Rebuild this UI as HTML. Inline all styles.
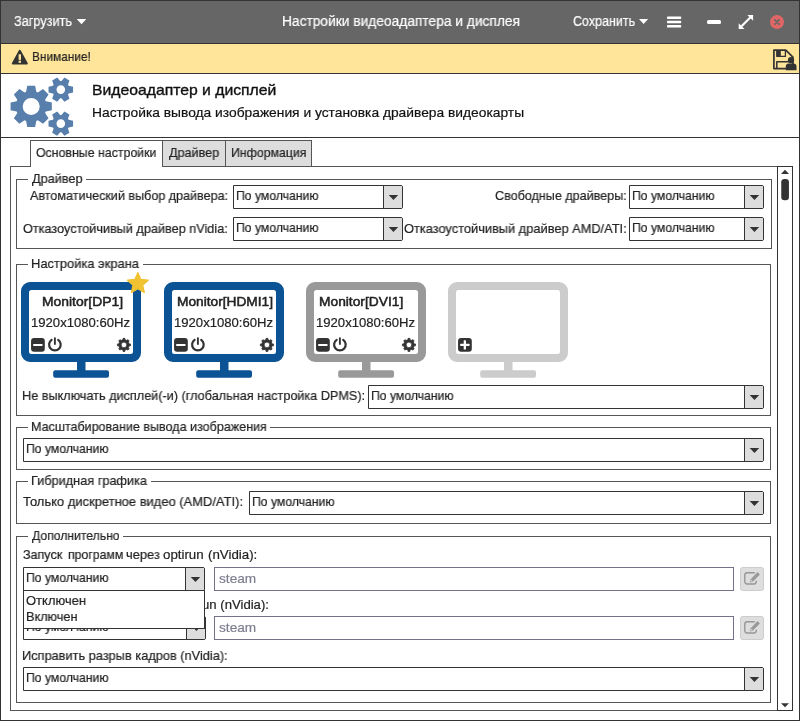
<!DOCTYPE html>
<html lang="ru"><head><meta charset="utf-8"><title>Настройки видеоадаптера и дисплея</title>
<style>
html,body{margin:0;padding:0;background:#fff}
body{width:800px;height:721px;position:relative;overflow:hidden;font-family:"Liberation Sans",sans-serif}
.abs{position:absolute;display:block}
.t{position:absolute;white-space:pre;line-height:1;transform-origin:0 50%;-webkit-text-stroke:0.2px currentColor;will-change:transform}
</style></head><body>
<div class="abs" style="left:0px;top:0px;width:800px;height:44px;background:#666"></div>
<div class="abs" style="left:0px;top:0px;width:800px;height:1px;background:#333"></div>
<span class="t" style="left:13.62px;top:14.07px;font-size:14px;color:#fff;transform:scaleX(0.9058);">Загрузить</span>
<svg class="abs" style="left:76px;top:18px" width="12" height="8"><path d="M0.7 0.9H10.3L5.5 6.2Z" fill="#fff"/></svg>
<span class="t" style="left:281.90px;top:14.07px;font-size:14px;color:#fff;transform:scaleX(0.9828);">Настройки видеоадаптера и дисплея</span>
<span class="t" style="left:573.37px;top:14.07px;font-size:14px;color:#fff;transform:scaleX(0.8932);">Сохранить</span>
<svg class="abs" style="left:639px;top:18px" width="11" height="8"><path d="M0 0.9H9.2L4.6 6.1Z" fill="#fff"/></svg>
<svg class="abs" style="left:667px;top:16px" width="15" height="13"><rect x="0" y="0.5" width="14.2" height="2.5" rx="0.7" fill="#fff"/><rect x="0" y="4.8" width="14.2" height="2.5" rx="0.7" fill="#fff"/><rect x="0" y="9.1" width="14.2" height="2.5" rx="0.7" fill="#fff"/></svg>
<div class="abs" style="left:707px;top:20px;width:14px;height:4px;border-radius:1.5px;background:#fff"></div>
<svg class="abs" style="left:738px;top:14px" width="16" height="16"><path d="M9.3 0.9H15.1V6.7Z M0.7 9.3V15.1H6.5Z" fill="#fff"/><path d="M3.5 12.3L12.3 3.5" stroke="#fff" stroke-width="2.1"/></svg>
<svg class="abs" style="left:769px;top:14px" width="16" height="16"><circle cx="8" cy="8" r="7" fill="#e06666"/><path d="M5.9 5.9L10.1 10.1M10.1 5.9L5.9 10.1" stroke="#666" stroke-width="1.8" stroke-linecap="round"/></svg>
<div class="abs" style="left:0px;top:43px;width:800px;height:1px;background:#333"></div>
<div class="abs" style="left:0px;top:44px;width:800px;height:29px;background:#ffe599"></div>
<svg class="abs" style="left:11px;top:49px" width="18" height="17"><path d="M8.8 1.8L15.8 14.6H1.8Z" fill="#333" stroke="#333" stroke-width="2" stroke-linejoin="round"/><rect x="7.6" y="5.3" width="2.4" height="5.6" fill="#ffe599"/><rect x="7.6" y="11.7" width="2.4" height="2.1" fill="#ffe599"/></svg>
<span class="t" style="left:31.65px;top:49.92px;font-size:13.5px;color:#222;transform:scaleX(0.8784);">Внимание!</span>
<svg class="abs" style="left:770px;top:46px" width="30" height="28"><path d="M3.9 4.1H15.8L22.9 11.2V22.6H3.9Z" fill="none" stroke="#333" stroke-width="1.7" stroke-linejoin="round"/><rect x="6.4" y="4.1" width="4.4" height="6.3" fill="#333"/><path d="M6.9 4.1V10.4H15.4V4.1" fill="none" stroke="#333" stroke-width="1.3"/><path d="M6.8 22.6V15.7H19" fill="none" stroke="#333" stroke-width="1.5" stroke-linejoin="round"/><circle cx="21" cy="14.2" r="3.1" fill="#333"/><path d="M15.8 24.2V20.6A3.2 3.2 0 0 1 19 17.4H23.3A3.2 3.2 0 0 1 26.5 20.6V24.2Z" fill="#333"/></svg>
<div class="abs" style="left:0px;top:73px;width:800px;height:1px;background:#333"></div>
<svg class="abs" style="left:0px;top:0px" width="100" height="140"><path d="M26.10 91.87 L27.26 85.77 L35.14 85.77 L36.30 91.87 L37.87 92.52 L43.00 89.03 L48.57 94.60 L45.08 99.73 L45.73 101.30 L51.83 102.46 L51.83 110.34 L45.73 111.50 L45.08 113.07 L48.57 118.20 L43.00 123.77 L37.87 120.28 L36.30 120.93 L35.14 127.03 L27.26 127.03 L26.10 120.93 L24.53 120.28 L19.40 123.77 L13.83 118.20 L17.32 113.07 L16.67 111.50 L10.57 110.34 L10.57 102.46 L16.67 101.30 L17.32 99.73 L13.83 94.60 L19.40 89.03 L24.53 92.52Z M22.70 106.40 a8.50 8.50 0 1 0 17.00 0 a8.50 8.50 0 1 0 -17.00 0Z M68.63 85.81 L73.07 86.72 L73.07 92.48 L68.63 93.39 L68.00 94.49 L69.43 98.79 L64.44 101.66 L61.44 98.28 L60.16 98.28 L57.16 101.66 L52.17 98.79 L53.60 94.49 L52.97 93.39 L48.53 92.48 L48.53 86.72 L52.97 85.81 L53.60 84.71 L52.17 80.41 L57.16 77.54 L60.16 80.92 L61.44 80.92 L64.44 77.54 L69.43 80.41 L68.00 84.71Z M56.50 89.60 a4.30 4.30 0 1 0 8.60 0 a4.30 4.30 0 1 0 -8.60 0Z M68.63 119.81 L73.07 120.72 L73.07 126.48 L68.63 127.39 L68.00 128.49 L69.43 132.79 L64.44 135.66 L61.44 132.28 L60.16 132.28 L57.16 135.66 L52.17 132.79 L53.60 128.49 L52.97 127.39 L48.53 126.48 L48.53 120.72 L52.97 119.81 L53.60 118.71 L52.17 114.41 L57.16 111.54 L60.16 114.92 L61.44 114.92 L64.44 111.54 L69.43 114.41 L68.00 118.71Z M56.50 123.60 a4.30 4.30 0 1 0 8.60 0 a4.30 4.30 0 1 0 -8.60 0Z" fill="#587eab" fill-rule="evenodd"/></svg>
<span class="t" style="left:91.74px;top:82.06px;font-size:15px;color:#111;transform:scaleX(1.0491);-webkit-text-stroke:0.35px currentColor;">Видеоадаптер и дисплей</span>
<span class="t" style="left:91.90px;top:105.62px;font-size:13.5px;color:#111;transform:scaleX(1.0219);">Настройка вывода изображения и установка драйвера видеокарты</span>
<div class="abs" style="left:0px;top:137px;width:800px;height:1px;background:#333"></div>
<div class="abs" style="left:10px;top:166px;width:783px;height:1px;background:#555"></div>
<div class="abs" style="left:10px;top:166px;width:1px;height:545px;background:#555"></div>
<div class="abs" style="left:792px;top:166px;width:1px;height:545px;background:#555"></div>
<div class="abs" style="left:10px;top:710px;width:783px;height:1px;background:#555"></div>
<div class="abs" style="left:162px;top:140px;width:64px;height:27px;background:#ddd;border:1px solid #555;box-sizing:border-box"></div>
<div class="abs" style="left:225px;top:140px;width:87px;height:27px;background:#ddd;border:1px solid #555;box-sizing:border-box"></div>
<div class="abs" style="left:30px;top:140px;width:133px;height:27px;background:#fff;border:1px solid #555;border-bottom:none;box-sizing:border-box"></div>
<span class="t" style="left:36.44px;top:145.97px;font-size:13px;color:#222;transform:scaleX(0.9493);">Основные настройки</span>
<span class="t" style="left:168.94px;top:145.97px;font-size:13px;color:#222;transform:scaleX(0.9698);">Драйвер</span>
<span class="t" style="left:230.51px;top:145.97px;font-size:13px;color:#222;transform:scaleX(0.9487);">Информация</span>
<div class="abs" style="left:777px;top:166px;width:16px;height:545px;border:1px solid #333;box-sizing:border-box"></div>
<svg class="abs" style="left:778px;top:167px" width="14" height="543"><path d="M3 6.9H11L7 2.8Z" fill="#333"/><rect x="3.25" y="12" width="7.7" height="21.3" rx="3.3" fill="#333"/><path d="M3 536.2H11L7 540.2Z" fill="#333"/></svg>
<div class="abs" style="left:16px;top:179px;width:756px;height:70px;border:1px solid #555;box-sizing:border-box"></div>
<div class="abs" style="left:28px;top:179px;width:58px;height:1px;background:#fff"></div>
<span class="t" style="left:31.94px;top:171.57px;font-size:13px;color:#222;transform:scaleX(0.9776);">Драйвер</span>
<span class="t" style="left:30.00px;top:189.47px;font-size:13px;color:#222;transform:scaleX(0.9669);">Автоматический выбор драйвера:</span>
<div class="abs" style="left:233px;top:185px;width:170px;height:24px;border:1px solid #333;box-sizing:border-box;background:#fff;border-radius:0 2px 2px 0;overflow:hidden"><div style="position:absolute;right:0;top:0;bottom:0;width:18px;background:#ddd;border-left:1px solid #333"></div></div>
<svg class="abs" style="left:388px;top:194px" width="12" height="8"><g transform="translate(0.20 0.20)"><path d="M0.5 0.7H10L5.25 5.8Z" fill="#333"/></g></svg>
<span class="t" style="left:235.62px;top:189.47px;font-size:13px;color:#222;transform:scaleX(0.9380);">По умолчанию</span>
<span class="t" style="left:495.37px;top:189.47px;font-size:13px;color:#222;transform:scaleX(0.9672);">Свободные драйверы:</span>
<div class="abs" style="left:629px;top:185px;width:135px;height:24px;border:1px solid #333;box-sizing:border-box;background:#fff;border-radius:0 2px 2px 0;overflow:hidden"><div style="position:absolute;right:0;top:0;bottom:0;width:18px;background:#ddd;border-left:1px solid #333"></div></div>
<svg class="abs" style="left:749px;top:194px" width="12" height="8"><g transform="translate(0.20 0.20)"><path d="M0.5 0.7H10L5.25 5.8Z" fill="#333"/></g></svg>
<span class="t" style="left:631.62px;top:189.47px;font-size:13px;color:#222;transform:scaleX(0.9380);">По умолчанию</span>
<span class="t" style="left:23.43px;top:221.97px;font-size:13px;color:#222;transform:scaleX(0.9747);">Отказоустойчивый драйвер nVidia:</span>
<div class="abs" style="left:233px;top:217px;width:170px;height:24px;border:1px solid #333;box-sizing:border-box;background:#fff;border-radius:0 2px 2px 0;overflow:hidden"><div style="position:absolute;right:0;top:0;bottom:0;width:18px;background:#ddd;border-left:1px solid #333"></div></div>
<svg class="abs" style="left:388px;top:226px" width="12" height="8"><g transform="translate(0.20 0.20)"><path d="M0.5 0.7H10L5.25 5.8Z" fill="#333"/></g></svg>
<span class="t" style="left:235.62px;top:221.47px;font-size:13px;color:#222;transform:scaleX(0.9380);">По умолчанию</span>
<span class="t" style="left:404.42px;top:221.97px;font-size:13px;color:#222;transform:scaleX(0.9861);">Отказоустойчивый драйвер AMD/ATI:</span>
<div class="abs" style="left:629px;top:217px;width:135px;height:24px;border:1px solid #333;box-sizing:border-box;background:#fff;border-radius:0 2px 2px 0;overflow:hidden"><div style="position:absolute;right:0;top:0;bottom:0;width:18px;background:#ddd;border-left:1px solid #333"></div></div>
<svg class="abs" style="left:749px;top:226px" width="12" height="8"><g transform="translate(0.20 0.20)"><path d="M0.5 0.7H10L5.25 5.8Z" fill="#333"/></g></svg>
<span class="t" style="left:631.62px;top:221.47px;font-size:13px;color:#222;transform:scaleX(0.9380);">По умолчанию</span>
<div class="abs" style="left:16px;top:264px;width:755px;height:152px;border:1px solid #555;box-sizing:border-box"></div>
<div class="abs" style="left:28px;top:264px;width:115px;height:1px;background:#fff"></div>
<span class="t" style="left:30.97px;top:256.57px;font-size:13px;color:#222;transform:scaleX(0.9925);">Настройка экрана</span>
<svg class="abs" style="left:21px;top:282px" width="122" height="98"><path fill-rule="evenodd" fill="#0b5394" d="M9 0H111A9 9 0 0 1 120 9V71A9 9 0 0 1 111 80H9A9 9 0 0 1 0 71V9A9 9 0 0 1 9 0Z M10.5 8A2.5 2.5 0 0 0 8 10.5V69.5A2.5 2.5 0 0 0 10.5 72H109.5A2.5 2.5 0 0 0 112 69.5V10.5A2.5 2.5 0 0 0 109.5 8Z"/><rect x="56" y="79" width="8.5" height="10" fill="#0b5394"/><rect x="32.2" y="88.2" width="55.8" height="7.5" rx="2" fill="#0b5394"/></svg>
<span class="t" style="left:41.89px;top:295.17px;font-size:13px;-webkit-text-stroke:0.5px currentColor;color:#222;transform:scaleX(1.0684);">Monitor[DP1]</span>
<span class="t" style="left:31.02px;top:316.17px;font-size:13px;color:#222;transform:scaleX(1.0079);">1920x1080:60Hz</span>
<svg class="abs" style="left:31px;top:337px" width="15" height="15"><g transform="translate(0.00 0.90)"><rect x="0.05" y="0" width="13.75" height="13.75" rx="3" fill="#333"/><rect x="2.2" y="6" width="9.3" height="2.2" rx="0.5" fill="#fff"/></g></svg>
<svg class="abs" style="left:47px;top:336px" width="16" height="17"><path d="M4.6 3.8A5.8 5.8 0 1 0 11.2 3.8" fill="none" stroke="#333" stroke-width="2.2" stroke-linecap="round"/><path d="M7.9 2.1V8" stroke="#333" stroke-width="1.9" stroke-linecap="round"/></svg>
<svg class="abs" style="left:116px;top:337px" width="16" height="16"><g transform="translate(0.45 0.40)"><path d="M6.55 2.29 L6.57 0.97 L8.43 0.97 L8.45 2.29 L10.51 3.14 L11.46 2.22 L12.78 3.54 L11.86 4.49 L12.71 6.55 L14.03 6.57 L14.03 8.43 L12.71 8.45 L11.86 10.51 L12.78 11.46 L11.46 12.78 L10.51 11.86 L8.45 12.71 L8.43 14.03 L6.57 14.03 L6.55 12.71 L4.49 11.86 L3.54 12.78 L2.22 11.46 L3.14 10.51 L2.29 8.45 L0.97 8.43 L0.97 6.57 L2.29 6.55 L3.14 4.49 L2.22 3.54 L3.54 2.22 L4.49 3.14Z M4.70 7.50 a2.80 2.80 0 1 0 5.60 0 a2.80 2.80 0 1 0 -5.60 0Z" fill="#333" stroke="#333" stroke-width="0.8" stroke-linejoin="round" fill-rule="evenodd"/></g></svg>
<svg class="abs" style="left:120px;top:265px" width="36" height="36"><path d="M17.85 7.65 L20.85 14.42 L28.22 15.18 L22.70 20.13 L24.26 27.37 L17.85 23.65 L11.44 27.37 L13.00 20.13 L7.48 15.18 L14.85 14.42Z" fill="#f1c232" stroke="#f1c232" stroke-width="1.3" stroke-linejoin="round"/></svg>
<svg class="abs" style="left:164px;top:282px" width="122" height="98"><path fill-rule="evenodd" fill="#0b5394" d="M9 0H111A9 9 0 0 1 120 9V71A9 9 0 0 1 111 80H9A9 9 0 0 1 0 71V9A9 9 0 0 1 9 0Z M10.5 8A2.5 2.5 0 0 0 8 10.5V69.5A2.5 2.5 0 0 0 10.5 72H109.5A2.5 2.5 0 0 0 112 69.5V10.5A2.5 2.5 0 0 0 109.5 8Z"/><rect x="56" y="79" width="8.5" height="10" fill="#0b5394"/><rect x="32.2" y="88.2" width="55.8" height="7.5" rx="2" fill="#0b5394"/></svg>
<span class="t" style="left:176.60px;top:295.17px;font-size:13px;-webkit-text-stroke:0.5px currentColor;color:#222;transform:scaleX(1.0550);">Monitor[HDMI1]</span>
<span class="t" style="left:174.02px;top:316.17px;font-size:13px;color:#222;transform:scaleX(1.0079);">1920x1080:60Hz</span>
<svg class="abs" style="left:174px;top:337px" width="15" height="15"><g transform="translate(0.00 0.90)"><rect x="0.05" y="0" width="13.75" height="13.75" rx="3" fill="#333"/><rect x="2.2" y="6" width="9.3" height="2.2" rx="0.5" fill="#fff"/></g></svg>
<svg class="abs" style="left:190px;top:336px" width="16" height="17"><path d="M4.6 3.8A5.8 5.8 0 1 0 11.2 3.8" fill="none" stroke="#333" stroke-width="2.2" stroke-linecap="round"/><path d="M7.9 2.1V8" stroke="#333" stroke-width="1.9" stroke-linecap="round"/></svg>
<svg class="abs" style="left:259px;top:337px" width="16" height="16"><g transform="translate(0.45 0.40)"><path d="M6.55 2.29 L6.57 0.97 L8.43 0.97 L8.45 2.29 L10.51 3.14 L11.46 2.22 L12.78 3.54 L11.86 4.49 L12.71 6.55 L14.03 6.57 L14.03 8.43 L12.71 8.45 L11.86 10.51 L12.78 11.46 L11.46 12.78 L10.51 11.86 L8.45 12.71 L8.43 14.03 L6.57 14.03 L6.55 12.71 L4.49 11.86 L3.54 12.78 L2.22 11.46 L3.14 10.51 L2.29 8.45 L0.97 8.43 L0.97 6.57 L2.29 6.55 L3.14 4.49 L2.22 3.54 L3.54 2.22 L4.49 3.14Z M4.70 7.50 a2.80 2.80 0 1 0 5.60 0 a2.80 2.80 0 1 0 -5.60 0Z" fill="#333" stroke="#333" stroke-width="0.8" stroke-linejoin="round" fill-rule="evenodd"/></g></svg>
<svg class="abs" style="left:306px;top:282px" width="122" height="98"><path fill-rule="evenodd" fill="#999" d="M9 0H111A9 9 0 0 1 120 9V71A9 9 0 0 1 111 80H9A9 9 0 0 1 0 71V9A9 9 0 0 1 9 0Z M10.5 8A2.5 2.5 0 0 0 8 10.5V69.5A2.5 2.5 0 0 0 10.5 72H109.5A2.5 2.5 0 0 0 112 69.5V10.5A2.5 2.5 0 0 0 109.5 8Z"/><rect x="56" y="79" width="8.5" height="10" fill="#999"/><rect x="32.2" y="88.2" width="55.8" height="7.5" rx="2" fill="#999"/></svg>
<span class="t" style="left:318.90px;top:295.17px;font-size:13px;-webkit-text-stroke:0.5px currentColor;color:#222;transform:scaleX(1.0599);">Monitor[DVI1]</span>
<span class="t" style="left:316.02px;top:316.17px;font-size:13px;color:#222;transform:scaleX(1.0079);">1920x1080:60Hz</span>
<svg class="abs" style="left:316px;top:337px" width="15" height="15"><g transform="translate(0.00 0.90)"><rect x="0.05" y="0" width="13.75" height="13.75" rx="3" fill="#333"/><rect x="2.2" y="6" width="9.3" height="2.2" rx="0.5" fill="#fff"/></g></svg>
<svg class="abs" style="left:332px;top:336px" width="16" height="17"><path d="M4.6 3.8A5.8 5.8 0 1 0 11.2 3.8" fill="none" stroke="#333" stroke-width="2.2" stroke-linecap="round"/><path d="M7.9 2.1V8" stroke="#333" stroke-width="1.9" stroke-linecap="round"/></svg>
<svg class="abs" style="left:401px;top:337px" width="16" height="16"><g transform="translate(0.45 0.40)"><path d="M6.55 2.29 L6.57 0.97 L8.43 0.97 L8.45 2.29 L10.51 3.14 L11.46 2.22 L12.78 3.54 L11.86 4.49 L12.71 6.55 L14.03 6.57 L14.03 8.43 L12.71 8.45 L11.86 10.51 L12.78 11.46 L11.46 12.78 L10.51 11.86 L8.45 12.71 L8.43 14.03 L6.57 14.03 L6.55 12.71 L4.49 11.86 L3.54 12.78 L2.22 11.46 L3.14 10.51 L2.29 8.45 L0.97 8.43 L0.97 6.57 L2.29 6.55 L3.14 4.49 L2.22 3.54 L3.54 2.22 L4.49 3.14Z M4.70 7.50 a2.80 2.80 0 1 0 5.60 0 a2.80 2.80 0 1 0 -5.60 0Z" fill="#333" stroke="#333" stroke-width="0.8" stroke-linejoin="round" fill-rule="evenodd"/></g></svg>
<svg class="abs" style="left:448px;top:282px" width="122" height="98"><path fill-rule="evenodd" fill="#ccc" d="M9 0H111A9 9 0 0 1 120 9V71A9 9 0 0 1 111 80H9A9 9 0 0 1 0 71V9A9 9 0 0 1 9 0Z M10.5 8A2.5 2.5 0 0 0 8 10.5V69.5A2.5 2.5 0 0 0 10.5 72H109.5A2.5 2.5 0 0 0 112 69.5V10.5A2.5 2.5 0 0 0 109.5 8Z"/><rect x="56" y="79" width="8.5" height="10" fill="#ccc"/><rect x="32.2" y="88.2" width="55.8" height="7.5" rx="2" fill="#ccc"/></svg>
<svg class="abs" style="left:458px;top:337px" width="15" height="15"><g transform="translate(0.00 0.90)"><rect x="0.05" y="0" width="13.75" height="13.75" rx="3" fill="#333"/><rect x="2.2" y="5.8" width="9.3" height="2.3" rx="0.5" fill="#fff"/><rect x="5.7" y="2.3" width="2.3" height="9.3" rx="0.5" fill="#fff"/></g></svg>
<span class="t" style="left:21.99px;top:389.47px;font-size:13px;color:#222;transform:scaleX(0.9743);">Не выключать дисплей(-и) (глобальная настройка DPMS):</span>
<div class="abs" style="left:368px;top:385px;width:396px;height:24px;border:1px solid #333;box-sizing:border-box;background:#fff;border-radius:0 2px 2px 0;overflow:hidden"><div style="position:absolute;right:0;top:0;bottom:0;width:18px;background:#ddd;border-left:1px solid #333"></div></div>
<svg class="abs" style="left:749px;top:394px" width="12" height="8"><g transform="translate(0.20 0.20)"><path d="M0.5 0.7H10L5.25 5.8Z" fill="#333"/></g></svg>
<span class="t" style="left:370.62px;top:389.47px;font-size:13px;color:#222;transform:scaleX(0.9380);">По умолчанию</span>
<div class="abs" style="left:16px;top:427px;width:755px;height:43px;border:1px solid #555;box-sizing:border-box"></div>
<div class="abs" style="left:28px;top:427px;width:242px;height:1px;background:#fff"></div>
<span class="t" style="left:31.00px;top:419.57px;font-size:13px;color:#222;transform:scaleX(0.9641);">Масштабирование вывода изображения</span>
<div class="abs" style="left:23px;top:438px;width:741px;height:24px;border:1px solid #333;box-sizing:border-box;background:#fff;border-radius:0 2px 2px 0;overflow:hidden"><div style="position:absolute;right:0;top:0;bottom:0;width:18px;background:#ddd;border-left:1px solid #333"></div></div>
<svg class="abs" style="left:749px;top:447px" width="12" height="8"><g transform="translate(0.20 0.20)"><path d="M0.5 0.7H10L5.25 5.8Z" fill="#333"/></g></svg>
<span class="t" style="left:25.62px;top:442.47px;font-size:13px;color:#222;transform:scaleX(0.9380);">По умолчанию</span>
<div class="abs" style="left:16px;top:481px;width:755px;height:43px;border:1px solid #555;box-sizing:border-box"></div>
<div class="abs" style="left:28px;top:481px;width:123px;height:1px;background:#fff"></div>
<span class="t" style="left:30.98px;top:473.57px;font-size:13px;color:#222;transform:scaleX(0.9785);">Гибридная графика</span>
<span class="t" style="left:22.74px;top:495.47px;font-size:13px;color:#222;transform:scaleX(0.9958);">Только дискретное видео (AMD/ATI):</span>
<div class="abs" style="left:249px;top:491px;width:515px;height:24px;border:1px solid #333;box-sizing:border-box;background:#fff;border-radius:0 2px 2px 0;overflow:hidden"><div style="position:absolute;right:0;top:0;bottom:0;width:18px;background:#ddd;border-left:1px solid #333"></div></div>
<svg class="abs" style="left:749px;top:500px" width="12" height="8"><g transform="translate(0.20 0.20)"><path d="M0.5 0.7H10L5.25 5.8Z" fill="#333"/></g></svg>
<span class="t" style="left:251.62px;top:495.47px;font-size:13px;color:#222;transform:scaleX(0.9380);">По умолчанию</span>
<div class="abs" style="left:16px;top:536px;width:755px;height:167px;border:1px solid #555;box-sizing:border-box"></div>
<div class="abs" style="left:28px;top:536px;width:95px;height:1px;background:#fff"></div>
<span class="t" style="left:31.94px;top:528.57px;font-size:13px;color:#222;transform:scaleX(0.9358);">Дополнительно</span>
<span class="t" style="left:23.32px;top:548.47px;font-size:13px;color:#222;transform:scaleX(0.9660);">Запуск</span>
<span class="t" style="left:67.60px;top:548.47px;font-size:13px;color:#222;transform:scaleX(0.9428);">программ</span>
<span class="t" style="left:126.29px;top:548.47px;font-size:13px;color:#222;transform:scaleX(0.9883);">через</span>
<span class="t" style="left:163.47px;top:548.47px;font-size:13px;color:#222;transform:scaleX(1.0225);">optirun</span>
<span class="t" style="left:207.50px;top:548.47px;font-size:13px;color:#222;transform:scaleX(1.0227);">(nVidia):</span>
<div class="abs" style="left:23px;top:567px;width:182px;height:24px;border:1px solid #333;box-sizing:border-box;background:#fff;border-radius:0 2px 2px 0;overflow:hidden"><div style="position:absolute;right:0;top:0;bottom:0;width:18px;background:#ddd;border-left:1px solid #333"></div></div>
<svg class="abs" style="left:190px;top:576px" width="12" height="8"><g transform="translate(0.20 0.20)"><path d="M0.5 0.7H10L5.25 5.8Z" fill="#333"/></g></svg>
<span class="t" style="left:25.62px;top:571.47px;font-size:13px;color:#222;transform:scaleX(0.9380);">По умолчанию</span>
<div class="abs" style="left:214px;top:567px;width:520px;height:24px;border:1px solid #727288;box-sizing:border-box;background:#fff"></div>
<span class="t" style="left:219.36px;top:571.77px;font-size:13px;color:#7f7f92;transform:scaleX(1.0509);">steam</span>
<div class="abs" style="left:740px;top:567px;width:24px;height:24px;border:1px solid #ccc;box-sizing:border-box;background:#dedede;border-radius:2.5px"></div>
<svg class="abs" style="left:740px;top:567px" width="24" height="24"><path d="M14.8 5.7H7A2.2 2.2 0 0 0 4.8 7.9V14.8A2.2 2.2 0 0 0 7 17H14.1A2.2 2.2 0 0 0 16.3 14.8V13.7" fill="none" stroke="#969696" stroke-width="1.4"/><path d="M17.6 5.1L19.9 7.5L13 14.6L10.1 15.5L10.7 12.3Z" fill="#999"/><circle cx="11.6" cy="13.8" r="0.8" fill="#dedede"/></svg>
<span class="t" style="left:23.33px;top:597.97px;font-size:13px;color:#222;transform:scaleX(0.9519);">Запуск программ через primusr</span>
<span class="t" style="left:202.41px;top:597.97px;font-size:13px;color:#222;transform:scaleX(1.0105);">un (nVidia):</span>
<div class="abs" style="left:23px;top:616px;width:183px;height:24px;border:1px solid #333;box-sizing:border-box;background:#fff;border-radius:0 2px 2px 0;overflow:hidden"><div style="position:absolute;right:0;top:0;bottom:0;width:18px;background:#ddd;border-left:1px solid #333"></div></div>
<svg class="abs" style="left:191px;top:625px" width="12" height="8"><g transform="translate(0.20 0.20)"><path d="M0.5 0.7H10L5.25 5.8Z" fill="#333"/></g></svg>
<span class="t" style="left:25.62px;top:620.47px;font-size:13px;color:#222;transform:scaleX(0.9380);">По умолчанию</span>
<div class="abs" style="left:214px;top:616px;width:520px;height:24px;border:1px solid #727288;box-sizing:border-box;background:#fff"></div>
<span class="t" style="left:219.36px;top:620.77px;font-size:13px;color:#7f7f92;transform:scaleX(1.0509);">steam</span>
<div class="abs" style="left:740px;top:616px;width:24px;height:24px;border:1px solid #ccc;box-sizing:border-box;background:#dedede;border-radius:2.5px"></div>
<svg class="abs" style="left:740px;top:616px" width="24" height="24"><path d="M14.8 5.7H7A2.2 2.2 0 0 0 4.8 7.9V14.8A2.2 2.2 0 0 0 7 17H14.1A2.2 2.2 0 0 0 16.3 14.8V13.7" fill="none" stroke="#969696" stroke-width="1.4"/><path d="M17.6 5.1L19.9 7.5L13 14.6L10.1 15.5L10.7 12.3Z" fill="#999"/><circle cx="11.6" cy="13.8" r="0.8" fill="#dedede"/></svg>
<span class="t" style="left:21.98px;top:648.97px;font-size:13px;color:#222;transform:scaleX(0.9832);">Исправить разрыв кадров (nVidia):</span>
<div class="abs" style="left:23px;top:667px;width:741px;height:24px;border:1px solid #333;box-sizing:border-box;background:#fff;border-radius:0 2px 2px 0;overflow:hidden"><div style="position:absolute;right:0;top:0;bottom:0;width:18px;background:#ddd;border-left:1px solid #333"></div></div>
<svg class="abs" style="left:749px;top:676px" width="12" height="8"><g transform="translate(0.20 0.20)"><path d="M0.5 0.7H10L5.25 5.8Z" fill="#333"/></g></svg>
<span class="t" style="left:25.62px;top:671.47px;font-size:13px;color:#222;transform:scaleX(0.9380);">По умолчанию</span>
<div class="abs" style="left:23px;top:590px;width:182px;height:39px;border:1px solid #333;box-sizing:border-box;background:#fff"></div>
<span class="t" style="left:26.42px;top:593.77px;font-size:13px;color:#222;transform:scaleX(0.9971);">Отключен</span>
<span class="t" style="left:25.98px;top:609.77px;font-size:13px;color:#222;transform:scaleX(0.9779);">Включен</span>
<div class="abs" style="left:0px;top:0px;width:1px;height:721px;background:#333"></div>
<div class="abs" style="left:799px;top:0px;width:1px;height:721px;background:#333"></div>
<div class="abs" style="left:0px;top:720px;width:800px;height:1px;background:#333"></div>
</body></html>
